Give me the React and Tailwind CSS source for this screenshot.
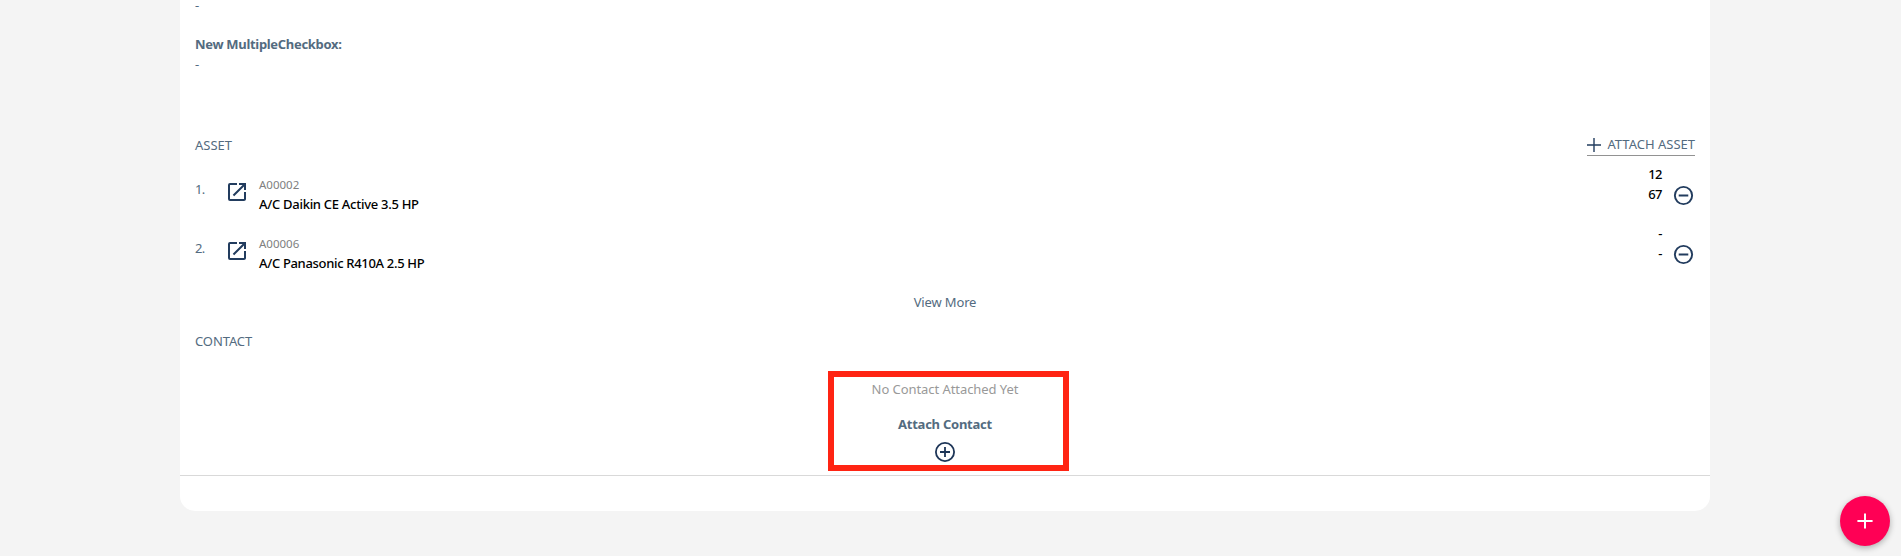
const assets = [
  { no: "1.", code: "A00002", name: "A/C Daikin CE Active 3.5 HP", tracking: "tracking-[-0.28px]", top: "12", bottom: "67" },
  { no: "2.", code: "A00006", name: "A/C Panasonic R410A 2.5 HP", tracking: "tracking-[-0.32px]", top: "-", bottom: "-" },
];

function Icon({ d, className }) {
  return (
    <svg viewBox="0 0 24 24" fill="currentColor" className={className}>
      <path d={d} />
    </svg>
  );
}

const OPEN = "M19 19H5V5h7V3H5a2 2 0 0 0-2 2v14a2 2 0 0 0 2 2h14c1.1 0 2-.9 2-2v-7h-2v7zM14 3v2h3.59l-9.83 9.83 1.41 1.41L19 6.41V10h2V3h-7z";
const MINUS = "M7 11v2h10v-2H7zm5-9a10 10 0 1 0 0 20 10 10 0 0 0 0-20zm0 18a8 8 0 1 1 0-16 8 8 0 0 1 0 16z";
const PLUS_CIRCLE = "M12.9 7h-1.8v4.1H7v1.8h4.1V17h1.8v-4.1H17v-1.8h-4.1V7zM12 2a10 10 0 1 0 0 20 10 10 0 0 0 0-20zm0 18.2a8.2 8.2 0 1 1 0-16.4 8.2 8.2 0 0 1 0 16.4z";
const PLUS = "M19 12.9h-6.1V19h-1.8v-6.1H5v-1.8h6.1V5h1.8v6.1H19v1.8z";

function AssetRow({ asset }) {
  return (
    <li className="flex h-[59px] items-start">
      <span className="mt-[15px] w-[30px] tracking-[-0.8px]">{asset.no}</span>
      <Icon d={OPEN} className="mt-4 size-6 text-[#223c5e]" />
      <div className="ml-[10px] mt-[11px] flex-1">
        <p className="text-[11.5px] leading-[19px] text-[#808080]">{asset.code}</p>
        <p className={`font-medium text-black ${asset.tracking}`}>{asset.name}</p>
      </div>
      <div className="text-right font-medium tracking-[-0.5px] text-black">
        <p>{asset.top}</p>
        <p>{asset.bottom}</p>
      </div>
      <Icon d={MINUS} className="ml-[10px] mt-5 size-[23px] text-[#223c5e]" />
    </li>
  );
}

export default function App() {
  return (
    <div className="relative h-[556px] overflow-hidden bg-[#f4f4f4] pl-[180px] font-['Noto_Sans',sans-serif] text-[13px] leading-5 text-[#536b80]">
      <main className="flex h-[511px] w-[1530px] flex-col rounded-b-[15px] bg-white">
        <section className="px-[15px]">
          <p className="-mt-[5px]">-</p>
          <h3 className="mt-[19px] font-bold tracking-[-0.31px]">New MultipleCheckbox:</h3>
          <p>-</p>
        </section>

        <section className="mt-[60px] px-[15px]">
          <header className="flex h-[30px] items-start justify-between">
            <h2 className="mt-px">ASSET</h2>
            <button className="flex h-[22px] items-start border-b border-[#929292]">
              <svg viewBox="0 0 14 14" className="mt-[4px] ml-[0.5px] size-[14px]" stroke="#223c5e" strokeWidth="1.4">
                <path d="M7 0v14M0 7h14" />
              </svg>
              <span className="ml-[6px]">ATTACH ASSET</span>
            </button>
          </header>
          <ul>
            {assets.map((asset) => (
              <AssetRow key={asset.no} asset={asset} />
            ))}
          </ul>
          <p className="mt-[10px] text-center tracking-[-0.15px]">View More</p>
        </section>

        <section className="mt-[19px] flex h-[145px] flex-col border-b border-[#d9d9d9] px-[15px]">
          <h2 className="tracking-[-0.1px]">CONTACT</h2>
          <div className="mt-7 flex flex-col items-center">
            <p className="tracking-[-0.06px] text-[#999999]">No Contact Attached Yet</p>
            <p className="mt-[15px] font-bold tracking-[-0.25px]">Attach Contact</p>
            <Icon d={PLUS_CIRCLE} className="mt-[6px] size-6 text-[#1d3557]" />
          </div>
        </section>
      </main>

      <div className="absolute left-[828px] top-[371px] h-[100px] w-[241px] border-6 border-[#ff2413]" />
      <button className="absolute left-[1840px] top-[496px] flex size-[50px] items-center justify-center rounded-full bg-[#ff0055] text-white shadow-[0_2px_6px_rgba(0,0,0,0.3)]">
        <Icon d={PLUS} className="size-[26px]" />
      </button>
    </div>
  );
}
